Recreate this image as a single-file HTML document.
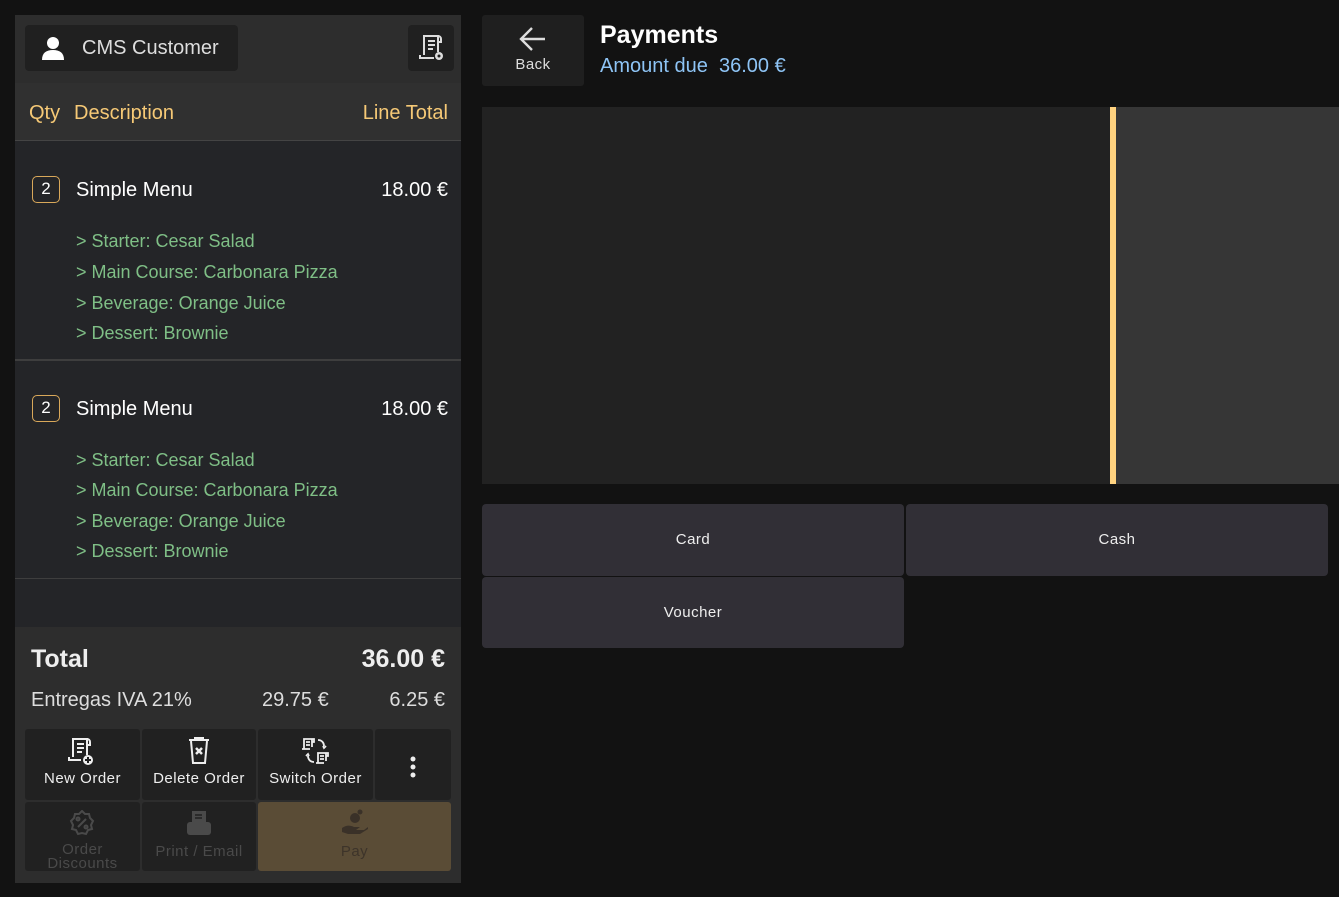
<!DOCTYPE html>
<html><head><meta charset="utf-8"><style>
*{box-sizing:border-box;margin:0;padding:0}
body{width:1339px;height:897px;background:#121212;font-family:"Liberation Sans",sans-serif;position:relative;overflow:hidden;color:#eee}
.a{position:absolute}
.panel{left:15px;top:15px;width:446px;height:868px;background:#242528}
.top{left:0;top:0;width:446px;height:68px;background:#2d2d2d}
.hdr{left:0;top:68px;width:446px;height:58px;background:#303030;border-bottom:1px solid #444;color:#f6c976;font-size:20px}
.cust{left:10px;top:10px;width:213px;height:46px;background:#202020;border-radius:4px;font-size:20px;color:#ddd}
.ib{left:393px;top:10px;width:46px;height:46px;background:#202020;border-radius:4px}
.q{width:28px;height:27px;border:1.5px solid #d9a85a;border-radius:5px;text-align:center;line-height:24px;font-size:17px;color:#fff}
.name{font-size:20px;color:#fff}
.sub{font-size:18px;color:#7fbf86}
.sep{left:0;width:446px;height:2px;background:#3e3e3e}
.bot{left:0;top:612px;width:446px;height:256px;background:#2d2d2d}
.btn{background:#212121;border-radius:3px;text-align:center;font-size:15px;color:#eee;letter-spacing:0.5px}
.dis{color:#4a4a4a}
.pb{background:#312f36;border-radius:4px;text-align:center;font-size:15px;color:#eee;line-height:72px;letter-spacing:0.5px}
</style></head><body>
<div class="a panel">
 <div class="a top">
  <div class="a cust"><svg class="a" style="left:16px;top:11px" width="24" height="24" viewBox="0 0 24 24"><circle cx="12" cy="7" r="6" fill="#fff"/><path d="M1 24c0-7 4-10 11-10s11 3 11 10z" fill="#fff"/></svg><span class="a" style="left:57px;top:12px">CMS Customer</span></div>
  <div class="a ib"><svg class="a" style="left:10px;top:8px" width="28" height="30" viewBox="0 0 28 30" fill="none" stroke="#ddd" stroke-width="2"><path d="M6 22V3h14v16M20 3a3 3 0 0 1 3 3v3h-3M10 8h7M10 12h7M10 16h5M2 22v3h14"/><circle cx="21" cy="23" r="4" fill="#ddd" stroke="none"/><circle cx="21" cy="23" r="1.5" fill="#202020" stroke="none"/></svg></div>
 </div>
 <div class="a hdr"><span class="a" style="left:14px;top:19px">Qty</span><span class="a" style="left:59px;top:19px">Description</span><span class="a" style="right:13px;top:19px">Line Total</span></div>
 <div class="a q" style="left:17px;top:161px">2</div>
 <div class="a name" style="left:61px;top:164px">Simple Menu</div>
 <div class="a name" style="right:13px;top:164px">18.00 €</div>
 <div class="a sub" style="left:61px;top:216px">&gt; Starter: Cesar Salad</div>
 <div class="a sub" style="left:61px;top:247px">&gt; Main Course: Carbonara Pizza</div>
 <div class="a sub" style="left:61px;top:278px">&gt; Beverage: Orange Juice</div>
 <div class="a sub" style="left:61px;top:308px">&gt; Dessert: Brownie</div>
 <div class="a sep" style="top:344px"></div>
 <div class="a q" style="left:17px;top:380px">2</div>
 <div class="a name" style="left:61px;top:383px">Simple Menu</div>
 <div class="a name" style="right:13px;top:383px">18.00 €</div>
 <div class="a sub" style="left:61px;top:435px">&gt; Starter: Cesar Salad</div>
 <div class="a sub" style="left:61px;top:465px">&gt; Main Course: Carbonara Pizza</div>
 <div class="a sub" style="left:61px;top:496px">&gt; Beverage: Orange Juice</div>
 <div class="a sub" style="left:61px;top:526px">&gt; Dessert: Brownie</div>
 <div class="a sep" style="top:563px;height:1px"></div>
 <div class="a bot">
  <div class="a" style="left:16px;top:18px;font-size:25px;color:#eee;font-weight:bold">Total</div>
  <div class="a" style="right:16px;top:18px;font-size:25px;color:#eee;font-weight:bold">36.00 €</div>
  <div class="a" style="left:16px;top:62px;font-size:20px;color:#ddd">Entregas IVA 21%</div>
  <div class="a" style="left:247px;top:62px;font-size:20px;color:#ddd">29.75 €</div>
  <div class="a" style="right:16px;top:62px;font-size:20px;color:#ddd">6.25 €</div>
  <div class="a btn" style="left:10px;top:102px;width:115px;height:71px"><svg class="a" style="left:42px;top:8px" width="30" height="30" viewBox="0 0 30 30" fill="none" stroke="#eee" stroke-width="2"><path d="M6 20V2h14v16M20 2a3 3 0 0 1 3 3v3h-3M10 7h7M10 11h7M10 15h5M2 20v3h12"/><circle cx="21" cy="23" r="5" fill="#eee" stroke="none"/><path d="M21 20v6M18 23h6" stroke="#212121"/></svg><span class="a" style="left:0;right:0;top:41px">New Order</span></div>
  <div class="a btn" style="left:127px;top:102px;width:114px;height:71px"><svg class="a" style="left:46px;top:8px" width="22" height="28" viewBox="0 0 22 28" fill="none" stroke="#eee" stroke-width="2"><path d="M1 3h20M7 3V1h8v2M3 4l2 22h12l2-22"/><path d="M8 11l6 6M14 11l-6 6" stroke-width="2.5"/></svg><span class="a" style="left:0;right:0;top:41px">Delete Order</span></div>
  <div class="a btn" style="left:243px;top:102px;width:115px;height:71px"><svg class="a" style="left:43px;top:8px" width="30" height="28" viewBox="0 0 30 28" fill="none" stroke="#eee" stroke-width="1.8"><path d="M3 12V2h8v8M11 2h2v3h-2M5 5h4M5 8h4M1 12h8M17 3c4 0 6 3 6 6M22 9l1 2 2-2M13 25c-4 0-6-3-6-6M8 19l-1-2-2 2M17 26V16h8v8M25 16h2v3h-2M19 19h4M19 22h4M15 26h8"/></svg><span class="a" style="left:0;right:0;top:41px">Switch Order</span></div>
  <div class="a btn" style="left:360px;top:102px;width:76px;height:71px"><svg class="a" style="left:34px;top:27px" width="8" height="22"><circle cx="4" cy="3" r="2.5" fill="#eee"/><circle cx="4" cy="11" r="2.5" fill="#eee"/><circle cx="4" cy="19" r="2.5" fill="#eee"/></svg></div>
  <div class="a btn dis" style="left:10px;top:175px;width:115px;height:69px"><svg class="a" style="left:44px;top:8px" width="26" height="26" viewBox="0 0 26 26" fill="none" stroke="#4a4a4a" stroke-width="2"><path d="M13 1l3 3 4 0 1 4 3 3-2 4 1 4-4 1-2 4-4-1-4 1-2-4-4-1 1-4-2-4 3-3 1-4 4 0z"/><path d="M9 17l8-8"/><circle cx="9" cy="9" r="1.5"/><circle cx="17" cy="17" r="1.5"/></svg><span class="a" style="left:0;right:0;top:41px;line-height:14px">Order<br>Discounts</span></div>
  <div class="a btn dis" style="left:127px;top:175px;width:114px;height:69px"><svg class="a" style="left:44px;top:8px" width="26" height="26" viewBox="0 0 26 26"><rect x="6" y="1" width="14" height="12" fill="#4a4a4a"/><rect x="1" y="12" width="24" height="13" rx="3" fill="#4a4a4a"/><path d="M9 5h7M9 8h7" stroke="#212121" stroke-width="1.5"/></svg><span class="a" style="left:0;right:0;top:41px">Print / Email</span></div>
  <div class="a" style="left:243px;top:175px;width:193px;height:69px;background:#5a4c36;border-radius:3px;text-align:center;font-size:15px;color:#3d342a;letter-spacing:0.5px"><svg class="a" style="left:82px;top:7px" width="30" height="28" viewBox="0 0 30 28"><circle cx="15" cy="9" r="5" fill="#3a3128"/><circle cx="20" cy="3" r="2.5" fill="#3a3128"/><path d="M2 19c4-3 8-3 12-1h6l-4 3h8l4-3v2l-8 5H8l-6-2z" fill="#3a3128"/></svg><span class="a" style="left:0;right:0;top:41px">Pay</span></div>
 </div>
</div>
<div class="a" style="left:482px;top:15px;width:102px;height:71px;background:#1f1f1f;border-radius:3px;text-align:center;font-size:15px;color:#ddd;letter-spacing:0.5px"><svg class="a" style="left:37px;top:11px" width="28" height="26" viewBox="0 0 28 26" fill="none" stroke="#ddd" stroke-width="2.4"><path d="M26 13H3M13 2L2 13l11 11"/></svg><span class="a" style="left:0;right:0;top:41px">Back</span></div>
<div class="a" style="left:600px;top:21px;font-size:25px;font-weight:bold;color:#fff">Payments</div>
<div class="a" style="left:600px;top:55px;font-size:20px;color:#8ec4f5">Amount due&nbsp; 36.00 €</div>
<div class="a" style="left:482px;top:107px;width:628px;height:377px;background:#222"></div>
<div class="a" style="left:1110px;top:107px;width:6px;height:377px;background:#ffd27f"></div>
<div class="a" style="left:1116px;top:107px;width:223px;height:377px;background:#363636"></div>
<div class="a pb" style="left:482px;top:504px;width:422px;height:72px">Card</div>
<div class="a pb" style="left:906px;top:504px;width:422px;height:72px">Cash</div>
<div class="a pb" style="left:482px;top:577px;width:422px;height:71px">Voucher</div>
</body></html>
